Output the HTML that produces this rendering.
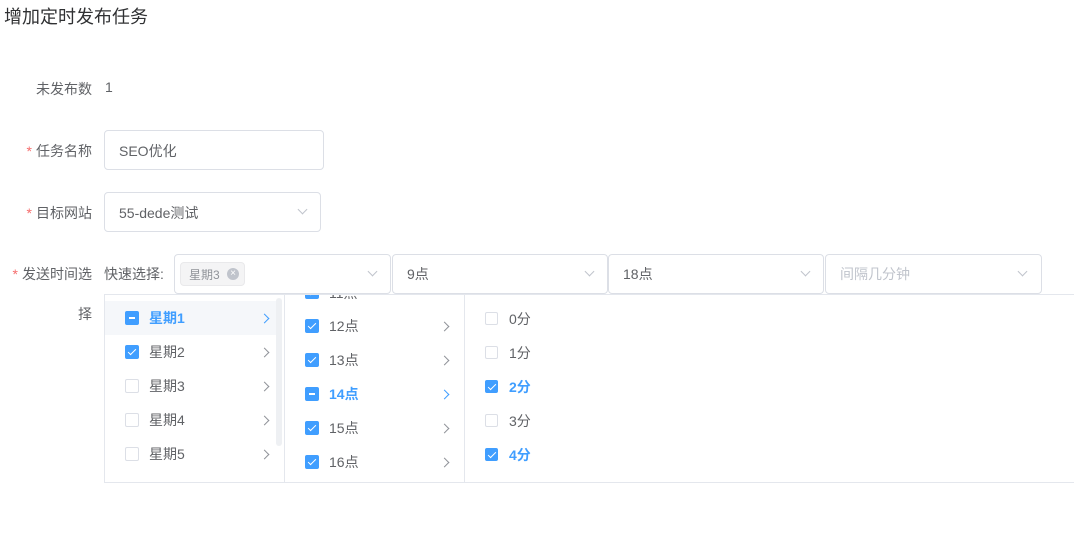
<!DOCTYPE html><html><head><meta charset="utf-8"><style>
*{box-sizing:border-box;margin:0;padding:0}
body{width:1074px;height:551px;background:#fff;position:relative;overflow:hidden;font-family:"Liberation Sans","Noto Sans CJK SC",sans-serif;font-size:14px;color:#606266}
.a{position:absolute;white-space:nowrap}
.lbl{position:absolute;right:982px;text-align:right;white-space:nowrap}
.st{color:#f56c6c;margin-right:4px}
.box{position:absolute;border:1px solid #dcdfe6;border-radius:4px;background:#fff}
.arr{position:absolute;width:7px;height:7px;border-right:1px solid #c0c4cc;border-bottom:1px solid #c0c4cc;transform:rotate(45deg)}
.ra{position:absolute;width:7px;height:7px;border-right:1px solid #909399;border-top:1px solid #909399;transform:rotate(45deg)}
.cb{position:absolute;width:14px;height:14px;border:1px solid #dcdfe6;border-radius:2px;background:#fff}
.cb.on{background:#409eff;border-color:#409eff}
.cb.on:after{content:"";position:absolute;left:4px;top:1px;width:3px;height:7px;border-right:1px solid #fff;border-bottom:1px solid #fff;transform:rotate(45deg)}
.cb.ind{background:#409eff;border-color:#409eff}
.cb.ind:after{content:"";position:absolute;left:3px;top:5px;width:6px;height:2px;background:#fff}
.b{color:#409eff;font-weight:bold}
</style></head><body>
<div class="a" style="left:4px;top:3px;font-size:18px;color:#303133">增加定时发布任务</div>
<div class="lbl" style="top:79px">未发布数</div>
<div class="a" style="left:105px;top:79px">1</div>
<div class="lbl" style="top:141px"><span class="st">*</span>任务名称</div>
<div class="box" style="left:104px;top:130px;width:220px;height:40px"></div>
<div class="a" style="left:119px;top:141px">SEO优化</div>
<div class="lbl" style="top:203px"><span class="st">*</span>目标网站</div>
<div class="box" style="left:104px;top:192px;width:217px;height:40px"></div>
<div class="a" style="left:119px;top:203px">55-dede测试</div>
<div class="arr" style="left:299px;top:206px"></div>
<div class="lbl" style="top:264px"><span class="st">*</span>发送时间选</div>
<div class="lbl" style="top:304px">择</div>
<div class="a" style="left:104px;top:264px">快速选择:</div>
<div class="box" style="left:174px;top:254px;width:217px;height:40px"></div>
<div class="a" style="left:180px;top:262px;width:65px;height:24px;background:#f4f4f5;border:1px solid #e9e9eb;border-radius:4px;font-size:12px;color:#909399;padding:3px 0 0 8px">星期3<span style="position:absolute;left:46px;top:5px;width:12px;height:12px;border-radius:50%;background:#c0c4cc;color:#fff;font-size:10px;line-height:12px;text-align:center">×</span></div>
<div class="arr" style="left:369px;top:268px"></div>
<div class="box" style="left:392px;top:254px;width:216px;height:40px"></div>
<div class="a" style="left:407px;top:264px">9点</div>
<div class="arr" style="left:586px;top:268px"></div>
<div class="box" style="left:608px;top:254px;width:216px;height:40px"></div>
<div class="a" style="left:623px;top:264px">18点</div>
<div class="arr" style="left:802px;top:268px"></div>
<div class="box" style="left:825px;top:254px;width:217px;height:40px"></div>
<div class="a" style="left:840px;top:264px;color:#c0c4cc">间隔几分钟</div>
<div class="arr" style="left:1019px;top:268px"></div>
<div class="a" style="left:104px;top:294px;width:980px;height:189px;border:1px solid #e4e7ed;border-right:none;background:#fff;overflow:hidden">
<div class="a" style="left:0;top:0;width:180px;height:189px;border-right:1px solid #e4e7ed"></div>
<div class="a" style="left:180px;top:0;width:180px;height:189px;border-right:1px solid #e4e7ed"></div>
<div class="a" style="left:0;top:6px;width:175px;height:34px;background:#f5f7fa"></div>
<div class="a" style="left:171px;top:3px;width:6px;height:148px;background:#eef0f3;border-radius:3px"></div>
</div>
<!-- col1 -->
<div class="cb ind" style="left:125px;top:311px"></div><div class="a b" style="left:149px;top:308px">星期1</div><div class="ra" style="left:261px;top:315px;border-color:#409eff"></div>
<div class="cb on" style="left:125px;top:345px"></div><div class="a" style="left:149px;top:342px">星期2</div><div class="ra" style="left:261px;top:349px"></div>
<div class="cb" style="left:125px;top:379px"></div><div class="a" style="left:149px;top:376px">星期3</div><div class="ra" style="left:261px;top:383px"></div>
<div class="cb" style="left:125px;top:413px"></div><div class="a" style="left:149px;top:410px">星期4</div><div class="ra" style="left:261px;top:417px"></div>
<div class="cb" style="left:125px;top:447px"></div><div class="a" style="left:149px;top:444px">星期5</div><div class="ra" style="left:261px;top:451px"></div>
<!-- col2 -->
<div class="a" style="left:285px;top:295px;width:178px;height:6px;overflow:hidden"><div class="cb on" style="left:20px;top:-10px"></div><div class="a" style="left:44px;top:-12px">11点</div></div>
<div class="cb on" style="left:305px;top:319px"></div><div class="a" style="left:329px;top:316px">12点</div><div class="ra" style="left:441px;top:323px"></div>
<div class="cb on" style="left:305px;top:353px"></div><div class="a" style="left:329px;top:350px">13点</div><div class="ra" style="left:441px;top:357px"></div>
<div class="cb ind" style="left:305px;top:387px"></div><div class="a b" style="left:329px;top:384px">14点</div><div class="ra" style="left:441px;top:391px;border-color:#409eff"></div>
<div class="cb on" style="left:305px;top:421px"></div><div class="a" style="left:329px;top:418px">15点</div><div class="ra" style="left:441px;top:425px"></div>
<div class="cb on" style="left:305px;top:455px"></div><div class="a" style="left:329px;top:452px">16点</div><div class="ra" style="left:441px;top:459px"></div>
<!-- col3 -->
<div class="cb" style="left:485px;top:312px;width:13px;height:13px"></div><div class="a" style="left:509px;top:309px">0分</div>
<div class="cb" style="left:485px;top:346px;width:13px;height:13px"></div><div class="a" style="left:509px;top:343px">1分</div>
<div class="cb on" style="left:485px;top:380px;width:13px;height:13px"></div><div class="a b" style="left:509px;top:377px">2分</div>
<div class="cb" style="left:485px;top:414px;width:13px;height:13px"></div><div class="a" style="left:509px;top:411px">3分</div>
<div class="cb on" style="left:485px;top:448px;width:13px;height:13px"></div><div class="a b" style="left:509px;top:445px">4分</div>
</body></html>
